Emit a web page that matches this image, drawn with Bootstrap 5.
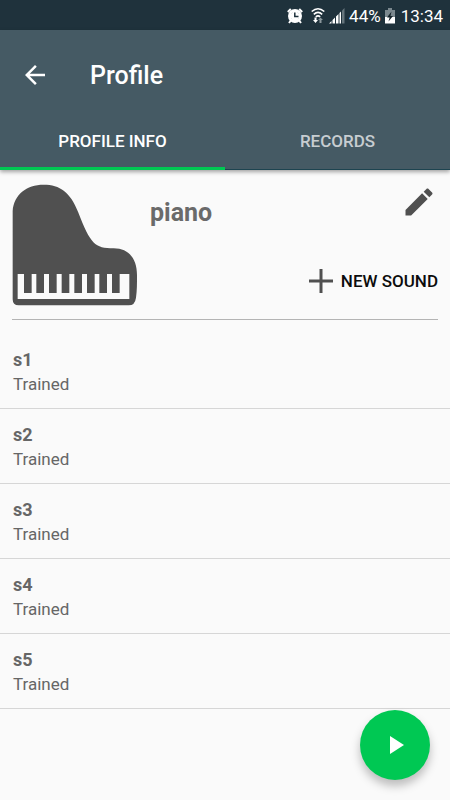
<!DOCTYPE html>
<html lang="en">
<head>
<meta charset="utf-8">
<meta name="viewport" content="width=device-width, initial-scale=1">
<title>Profile</title>
<link href="https://cdn.jsdelivr.net/npm/bootstrap@5.3.0/dist/css/bootstrap.min.css" rel="stylesheet">
<style>
body { font-family: Roboto, "Liberation Sans", sans-serif; background: #fafafa; color: #666; }
svg { display: block; flex: none; }
.status-bar { height: 30px; background: #1f323c; color: #fff; font-size: 17px; line-height: 30px; padding: 1px 7px 0 0; }
.status-bar .power { margin: 0 6px 0 4px; }
.app-header { background: #455a64; box-shadow: 0 2px 4px rgba(0,0,0,.35); position: relative; }
.app-bar { height: 90px; padding-left: 20px; }
.app-title { font-size: 25px; line-height: 32px; font-weight: 500; margin-left: 40px; padding-top: 2px; }
.icon-btn { background: none; border: 0; padding: 0; }
.tab-btn { height: 50px; padding: 0 0 8px; background: none; border: 0; border-bottom: 1px solid #1d4450; color: #c7cdd1; font-size: 17px; font-weight: 500; line-height: 24px; }
.tab-btn.active { color: #fff; border-bottom: 3px solid #00c853; padding-bottom: 6px; }
.profile-head { margin: 0 12px; padding: 14px 0 13px; border-bottom: 1px solid #b4b4b4; }
.profile-name { font-size: 25px; line-height: 30px; font-weight: 700; margin: 14px 0 0 12px; color: #6a6a6a; }
.head-actions { padding-bottom: 13px; }
.new-sound { color: #0c0c0c; font-size: 17px; font-weight: 500; line-height: 24px; gap: 8px; }
.sound-list { margin-top: 14px; }
.sound-item { height: 75px; padding: 13px 13px 0; border-bottom: 1px solid #d6d6d6; color: #666; }
.sound-name { font-size: 18px; line-height: 25px; font-weight: 700; }
.sound-state { font-size: 17px; line-height: 24px; }
.play-fab { position: fixed; right: 20px; bottom: 20px; width: 70px; height: 70px; background: #00c853; border: 0; box-shadow: 0 6px 10px rgba(0,0,0,.25); }
</style>
<script src="https://cdn.jsdelivr.net/npm/bootstrap@5.3.0/dist/js/bootstrap.bundle.min.js"></script>
</head>
<body>
<div class="status-bar d-flex align-items-center justify-content-end">
  <svg class="me-2" width="16" height="16" viewBox="0 0 16 16"><circle cx="8" cy="8" r="5.500" fill="none" stroke="#fff" stroke-width="3"/><circle cx="8" cy="8" r="4.500" fill="#fff"/><path d="M.8 4 3.800 1M15.200 4 12.200 1M3.800 12.500 2 15M12.200 12.500 14 15" stroke="#fff" stroke-width="2"/><path d="M7.800 4.500V8.500H11.500" fill="none" stroke="#1f323c" stroke-width="1.500"/></svg>
  <svg class="me-1" width="14" height="17" viewBox="0 0 14 17"><g fill="none" stroke="#fff" stroke-width="1.600"><path d="M.7 4.500Q7-1 13.300 4.500M2.800 7.300Q7 3.500 11.200 7.300M4.800 9.800Q7 8 9.200 9.800"/></g><path d="M3.500 10.500H5.500V13H7L4.500 16 2 13H3.500z" fill="#fff"/><path d="M8.500 16V13H7L9.500 10.500 12 13H10.500V16z" fill="#8b979c"/></svg>
  <svg width="16" height="16" viewBox="0 0 16 16"><path d="M0 15.500 2.500 13V15.500zM3.500 15.500V12L6 9.500V15.500zM7 15.500V8.500L9.500 6V15.500z" fill="#fff"/><path d="M10.500 15.500V5L12 3.500V15.500z" fill="#fff"/><path d="M13 15.500V2.500L15.500 0V15.500z" fill="#66757c"/></svg>
  <span class="ms-1">44%</span>
  <svg class="power" width="10" height="16" viewBox="0 0 10 16"><path d="M0 2H3V0H7V2H10V9H0z" fill="#7b888e"/><path d="M0 9H10V15.500H0z" fill="#fff"/><path d="M6.500 3.500 2 9.500H4.600L3.500 13.500 8 8H5.500z" fill="#15232a"/></svg>
  <span>13:34</span>
</div>
<header class="app-header">
  <div class="app-bar d-flex align-items-center">
    <button class="icon-btn" type="button" aria-label="Back"><svg width="30" height="30" viewBox="0 0 24 24"><path d="M20 11H7.830l5.590-5.590L12 4l-8 8 8 8 1.410-1.410L7.830 13H20z" fill="#fff"/></svg></button>
    <h1 class="app-title mb-0 text-white">Profile</h1>
  </div>
  <div class="row g-0" role="tablist">
    <button class="tab-btn active col-6" type="button" role="tab" aria-selected="true">PROFILE INFO</button>
    <button class="tab-btn col-6" type="button" role="tab" aria-selected="false">RECORDS</button>
  </div>
</header>
<main>
  <section class="profile-head d-flex">
    <svg width="126" height="122" viewBox="36 41 378 366" role="img" aria-label="Piano"><path d="M38 122C42 73 79 43 131 43C180 43 211 66 234 124C272 222 284 233 341 234C389 235 411 267 411 315C411 340 411 361 408 382Q405 405 386 405H56Q38 405 38 387z" fill="#505050"/><path d="M53 311H72V368H95V311H109V368H132V311H147V368H170V311H185V368H208V311H223V368H246V311H261V368H284V311H298V368H321V311H336V368H359V311H388V386H53z" fill="#fafafa"/></svg>
    <h2 class="profile-name mb-0">piano</h2>
    <div class="head-actions d-flex flex-column align-items-end justify-content-between ms-auto">
      <button class="icon-btn" type="button" aria-label="Edit profile"><svg width="38" height="36" viewBox="0 0 24 24"><path d="M3 17.250V21h3.750L17.810 9.940l-3.750-3.750L3 17.250zM20.710 7.040c.39-.39.39-1.020 0-1.410l-2.340-2.340c-.39-.39-1.020-.39-1.410 0l-1.830 1.830 3.750 3.750 1.830-1.830z" fill="#505050"/></svg></button>
      <button class="icon-btn new-sound d-flex align-items-center" type="button"><svg width="24" height="24" viewBox="0 0 24 24"><path d="M0 12H24M12 0V24" stroke="#505050" stroke-width="3"/></svg>NEW SOUND</button>
    </div>
  </section>
  <ul class="sound-list list-unstyled mb-0">
    <li class="sound-item"><div class="sound-name">s1</div><div class="sound-state">Trained</div></li>
    <li class="sound-item"><div class="sound-name">s2</div><div class="sound-state">Trained</div></li>
    <li class="sound-item"><div class="sound-name">s3</div><div class="sound-state">Trained</div></li>
    <li class="sound-item"><div class="sound-name">s4</div><div class="sound-state">Trained</div></li>
    <li class="sound-item"><div class="sound-name">s5</div><div class="sound-state">Trained</div></li>
  </ul>
</main>
<button class="play-fab rounded-circle d-flex align-items-center justify-content-center p-0" type="button" aria-label="Play"><svg width="30" height="30" viewBox="0 0 30 30"><path d="M10 6V24L24 15z" fill="#fff"/></svg></button>
</body>
</html>
